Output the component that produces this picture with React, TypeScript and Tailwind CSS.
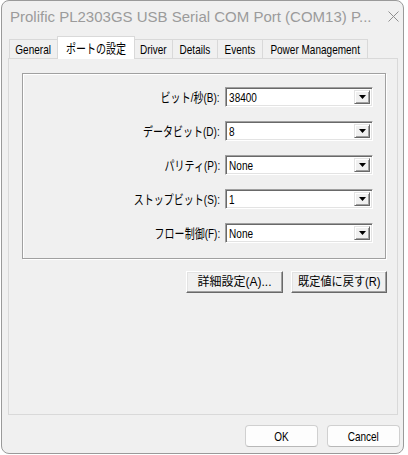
import React from "react";

const rows: [string, string][] = [
  ["ビット/秒(B):", "38400"],
  ["データビット(D):", "8"],
  ["パリティ(P):", "None"],
  ["ストップビット(S):", "1"],
  ["フロー制御(F):", "None"],
];

const tabs: { label: string; w: string; sel?: boolean }[] = [
  { label: "General", w: "w-[49px]" },
  { label: "ポートの設定", w: "w-[78px]", sel: true },
  { label: "Driver", w: "w-[39px]" },
  { label: "Details", w: "w-[46px]" },
  { label: "Events", w: "w-[46px]" },
  { label: "Power Management", w: "w-[106px]" },
];

function Combo({ value }: { value: string }) {
  return (
    <div className="relative flex h-[20px] w-[148px] items-center border border-t-[#a0a0a0] border-l-[#a0a0a0] border-r-white border-b-white bg-white shadow-[inset_1px_1px_0_#696969,inset_-1px_-1px_0_#e3e3e3]">
      <span className="inline-block origin-left scale-x-[0.77] whitespace-nowrap pl-[4px] text-[13px] leading-none text-black">
        {value}
      </span>
      <div className="absolute right-[2px] top-[2px] flex h-[14px] w-[16px] items-center justify-center border border-t-[#e3e3e3] border-l-[#e3e3e3] border-r-[#696969] border-b-[#696969] bg-[#f0f0f0] shadow-[inset_1px_1px_0_#fff,inset_-1px_-1px_0_#a0a0a0]">
        <svg width="7" height="4" viewBox="0 0 7 4">
          <path d="M0 0H7L3.5 4Z" fill="#000" />
        </svg>
      </div>
    </div>
  );
}

function ClassicButton({ children, w }: { children: React.ReactNode; w: string }) {
  return (
    <div
      className={`${w} flex h-[22px] items-center justify-center border border-t-white border-l-white border-r-[#696969] border-b-[#696969] bg-[#f0f0f0] text-[12px] leading-none text-black shadow-[inset_-1px_-1px_0_#a0a0a0,inset_1px_1px_0_#e3e3e3]`}
    >
      {children}
    </div>
  );
}

export default function App() {
  return (
    <div className="h-[455px] w-[408px] overflow-hidden bg-white font-['Liberation_Sans','Noto_Sans_CJK_JP',sans-serif]">
      <div className="ml-[1px] flex h-[454px] w-[403px] flex-col rounded-[8px] border border-[#9a9a9a] bg-[#f0f0f0]">
        {/* Title bar */}
        <div className="flex h-[30px] items-center justify-between pl-[8px] pr-[4px]">
          <span className="text-[15px] leading-none text-[#9b9b9b]">
            Prolific PL2303GS USB Serial COM Port (COM13) P...
          </span>
          <svg width="11" height="11" viewBox="0 0 11 11">
            <path d="M0.5 0.5L10.5 10.5M10.5 0.5L0.5 10.5" stroke="#8f8f8f" strokeWidth="1" />
          </svg>
        </div>
        {/* Tabs */}
        <div className="flex h-[27px] items-end pl-[7px]">
          {tabs.map((t, i) =>
            t.sel ? (
              <div
                key={i}
                className={`${t.w} relative z-10 -ml-px -mb-px flex h-[23px] items-center justify-center border border-b-0 border-[#d9d9d9] bg-white text-[13px] leading-none text-black`}
              >
                <span className="inline-block scale-x-[0.77] whitespace-nowrap">{t.label}</span>
              </div>
            ) : (
              <div
                key={i}
                className={`${t.w} ${i > 0 ? "-ml-px" : ""} flex h-[19px] items-center justify-center border border-b-0 border-[#d9d9d9] bg-[#f0f0f0] text-[13px] leading-none text-black`}
              >
                <span className="inline-block scale-x-[0.77] whitespace-nowrap">{t.label}</span>
              </div>
            )
          )}
        </div>
        {/* Page */}
        <div className="ml-[6px] flex h-[357px] w-[390px] flex-col border border-[#d9d9d9] bg-[#f0f0f0]">
          <div className="ml-[13px] mt-[14px] flex h-[186px] w-[364px] flex-col gap-[14px] border border-[#a0a0a0] pt-[13px] shadow-[inset_1px_1px_0_#fff,1px_1px_0_#fff]">
            {rows.map(([label, value], i) => (
              <div key={i} className="flex items-center justify-end gap-[5px] pr-[12px]">
                <span className="inline-block origin-right scale-x-[0.77] whitespace-nowrap text-[13px] leading-none text-black">
                  {label}
                </span>
                <Combo value={value} />
              </div>
            ))}
          </div>
          <div className="mr-[10px] mt-[12px] flex justify-end gap-[8px]">
            <ClassicButton w="w-[97px]">
              <span className="inline-block whitespace-nowrap">詳細設定(A)...</span>
            </ClassicButton>
            <ClassicButton w="w-[96px]">
              <span className="inline-block scale-x-[0.93] whitespace-nowrap">既定値に戻す(R)</span>
            </ClassicButton>
          </div>
        </div>
        {/* Footer */}
        <div className="mt-[10px] flex justify-end gap-[9px] pr-[3px]">
          <div className="flex h-[22px] w-[73px] items-center justify-center rounded-[4px] border border-[#d0d0d0] border-b-[#b8b8b8] bg-[#fdfdfd] text-[13px] leading-none text-black">
            <span className="inline-block scale-x-[0.77]">OK</span>
          </div>
          <div className="flex h-[22px] w-[73px] items-center justify-center rounded-[4px] border border-[#d0d0d0] border-b-[#b8b8b8] bg-[#fdfdfd] text-[13px] leading-none text-black">
            <span className="inline-block scale-x-[0.77]">Cancel</span>
          </div>
        </div>
      </div>
    </div>
  );
}
